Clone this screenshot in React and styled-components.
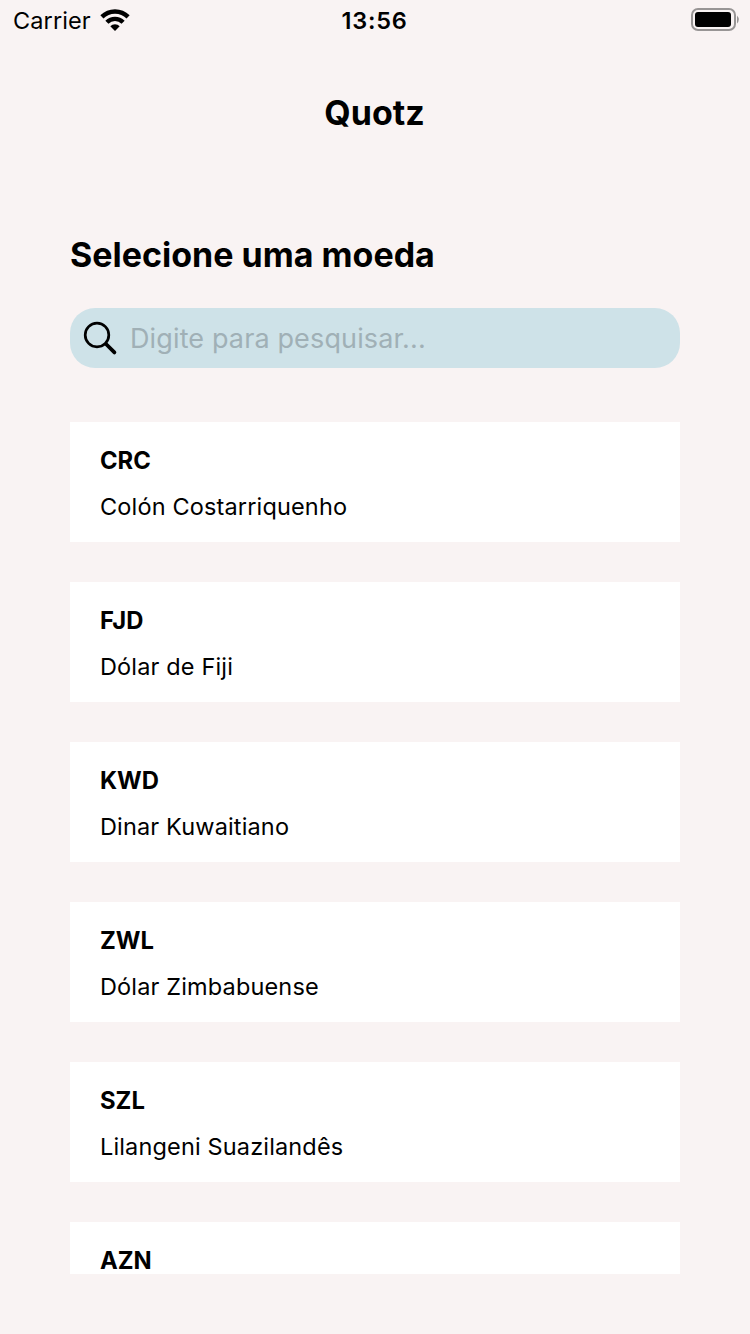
import React from 'react';
import styled, { createGlobalStyle } from 'styled-components';

const Global = createGlobalStyle`
  * { box-sizing: border-box; }
  body { margin: 0; background: #f9f3f3; font-family: Inter, "Liberation Sans", sans-serif; color: #000; }
`;
const Screen = styled.main`
  height: 1334px; overflow: hidden; display: flex; flex-direction: column; background: #f9f3f3;
`;
const StatusBar = styled.header`
  height: 40px; flex: none; display: grid; grid-template-columns: 1fr auto 1fr;
  padding: 0 10px 0 13px; align-items: center;
`;
const Carrier = styled.div`
  display: flex; align-items: center; gap: 9px; height: 40px; font-size: 23.5px; letter-spacing: 0.1px;
`;
const CarrierName = styled.span`
  height: 40px; line-height: 42px;
`;
const Clock = styled.time`
  height: 40px; font-size: 23.5px; line-height: 42px; font-weight: 600; letter-spacing: 0.8px; margin-left: -4px;
`;
const Battery = styled.svg`
  justify-self: end; display: block;
`;
const AppTitle = styled.h1`
  margin: 50px 0 0; text-align: center; font-size: 34px; line-height: 46px; font-weight: 700; padding-right: 1px;
`;
const Content = styled.section`
  padding: 0 70px; margin-top: 96px; display: flex; flex-direction: column;
`;
const Heading = styled.h2`
  margin: 0; font-size: 34px; line-height: 46px; font-weight: 700;
`;
const Search = styled.label`
  margin-top: 30px; height: 60px; border-radius: 25px; background: #cee2e8; display: flex; align-items: center; padding-left: 10px; gap: 10px;
`;
const SearchInput = styled.input`
  flex: 1; min-width: 0; border: 0; outline: 0; padding: 2px 0 0; background: transparent;
  font: 400 27px/40px Inter, sans-serif; letter-spacing: 0.13px;
  &::placeholder { color: #a0b0b6; opacity: 1; }
`;
const List = styled.ul`
  margin: 54px 0 0; padding: 0; list-style: none; height: 852px; overflow: hidden; display: flex; flex-direction: column; gap: 40px;
`;
const Card = styled.li`
  flex: none; height: 120px; background: #fff; padding: 21px 30px;
`;
const Code = styled.div`
  font-size: 23.8px; line-height: 36px; font-weight: 700;
`;
const Name = styled.div`
  margin-top: 10px; font-size: 23.5px; line-height: 36px; letter-spacing: 0.15px;
`;

const currencies = [
  ['CRC', 'Colón Costarriquenho'],
  ['FJD', 'Dólar de Fiji'],
  ['KWD', 'Dinar Kuwaitiano'],
  ['ZWL', 'Dólar Zimbabuense'],
  ['SZL', 'Lilangeni Suazilandês'],
  ['AZN'],
];

export default function App() {
  return (
    <Screen>
      <Global />
      <StatusBar>
        <Carrier>
          <CarrierName>Carrier</CarrierName>
          <svg width="30" height="22" viewBox="0 0 30 22" fill="none" stroke="#000" strokeWidth="4.4">
            <path d="M1.9 7.9a18.6 18.6 0 0 1 26.2 0" />
            <path d="M6.9 13.2a11.5 11.5 0 0 1 16.2 0" />
            <path d="M15 22l-4.7-4.7a6.6 6.6 0 0 1 9.4 0z" fill="#000" stroke="none" />
          </svg>
        </Carrier>
        <Clock>13:56</Clock>
        <Battery width="50" height="24" viewBox="0 0 50 24">
          <rect x="2" y="1" width="43" height="21" rx="6" fill="none" stroke="#989595" strokeWidth="2" />
          <rect x="5" y="4" width="36" height="15" rx="3" />
          <path d="M47 7.5q3.6 4 0 8z" fill="#989595" />
        </Battery>
      </StatusBar>
      <AppTitle>Quotz</AppTitle>
      <Content>
        <Heading>Selecione uma moeda</Heading>
        <Search>
          <svg width="40" height="40" viewBox="0 0 40 40" fill="none" stroke="#000" strokeWidth="2.7">
            <circle cx="17" cy="17" r="11.8" />
            <path d="M26 26l8.4 8.4" strokeWidth="3.8" strokeLinecap="round" />
          </svg>
          <SearchInput placeholder="Digite para pesquisar..." />
        </Search>
        <List>
          {currencies.map(([code, name]) => (
            <Card key={code}>
              <Code>{code}</Code>
              {name && <Name>{name}</Name>}
            </Card>
          ))}
        </List>
      </Content>
    </Screen>
  );
}
